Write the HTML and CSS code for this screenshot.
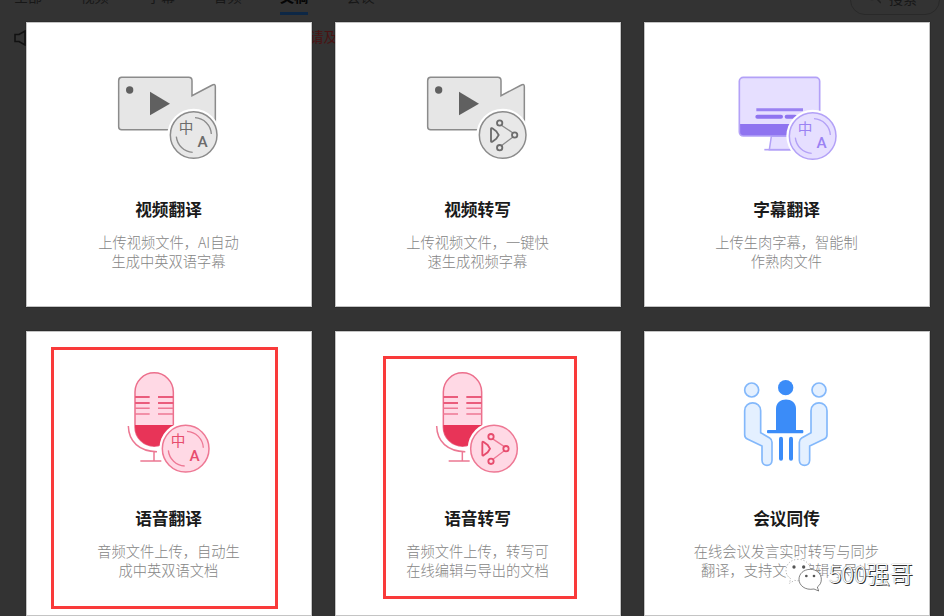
FILE: index.html
```
<!DOCTYPE html>
<html lang="zh-CN">
<head>
    <meta charset="UTF-8">
    <meta name="viewport" content="width=device-width, initial-scale=1.0">
    <title>翻译与转写</title>
    <link rel="stylesheet" href="styles.css">
</head>
<body>
    <!-- shared icon parts -->
    <svg class="defs" aria-hidden="true">
        <symbol id="camera" overflow="visible">
            <path d="M95 52H296Q306 52 306 62V107L367 75Q376 70 376 80V195L300 209H95Q86 209 86 200V62Q86 52 95 52Z" fill="#e6e6e6" stroke="#8b8b8b" stroke-width="4.5"/>
            <circle cx="119" cy="90" r="11" fill="#606060"/>
            <path d="M180 95L240 131L180 166Z" fill="#606060"/>
        </symbol>
        <symbol id="mic" overflow="visible">
            <path d="M135 96A57.500 57.500 0 0 1 250 96V201A57.500 57.500 0 0 1 135 201Z" fill="#ffd9e5" stroke="#ec6f8c" stroke-width="4.500"/>
            <path d="M135 195H250V201A57.500 57.500 0 0 1 135 201Z" fill="#e83458"/>
            <path d="M135 111H179M204 111H250M135 129H179M204 129H250" stroke="#ea5c7c" stroke-width="6"/>
            <path d="M135 145H179M204 145H250M135 162H179M204 162H250" stroke="#ee7894" stroke-width="4.500"/>
            <path d="M115 198C116 245 148 274 201 275M192 275V303M151 303H214" fill="none" stroke="#ec7893" stroke-width="4.500"/>
        </symbol>
        <symbol id="badge-lang" overflow="visible">
            <circle r="79" fill="#fff"/>
            <circle r="70" class="ring"/>
            <path d="M4 -52A52 52 0 0 1 53 -3M-52 5A52 52 0 0 0 -3 52" class="arc"/>
            <text x="-23" y="-7" class="zh">中</text>
            <text x="27" y="37" class="en">A</text>
        </symbol>
        <symbol id="badge-flow" overflow="visible">
            <circle r="79" fill="#fff"/>
            <circle r="70" class="ring"/>
            <path d="M-5 -30L31 -6M31 6L-5 33" class="arc"/>
            <path d="M-35 -18Q-35 -22 -31 -20L-19 -11L-12 0L-19 11L-31 20Q-35 22 -35 18Z" class="dot"/>
            <circle cx="-9" cy="-36" r="8" class="dot"/>
            <circle cx="36" cy="0" r="8" class="dot"/>
            <circle cx="-9" cy="38" r="8" class="dot"/>
        </symbol>
    </svg>

    <header class="header">
        <nav class="tabs">
            <span class="tab">全部</span>
            <span class="tab">视频</span>
            <span class="tab">字幕</span>
            <span class="tab">音频</span>
            <span class="tab active">文稿</span>
            <span class="tab">会议</span>
        </nav>
        <div class="search">
            <svg width="16" height="16" viewBox="0 0 16 16"><circle cx="7" cy="6" r="5.500"/><path d="M11 10l5 5"/></svg>
            <span>搜索</span>
        </div>
    </header>

    <div class="notice">
        <svg width="14" height="16" viewBox="0 0 14 16"><path d="M1 4.500H5L11 1V15L5 11.500H1Z"/></svg>
        <span>请及</span>
    </div>

    <main class="cards">
        <div class="card">
            <svg class="icon gray" viewBox="12 0 450 330">
                <use href="#camera"/>
                <use href="#badge-lang" x="311" y="225"/>
            </svg>
            <h3>视频翻译</h3>
            <p>上传视频文件，AI自动<br>生成中英双语字幕</p>
        </div>

        <div class="card">
            <svg class="icon gray" viewBox="12 0 450 330">
                <use href="#camera"/>
                <use href="#badge-flow" x="311" y="225"/>
            </svg>
            <h3>视频转写</h3>
            <p>上传视频文件，一键快<br>速生成视频字幕</p>
        </div>

        <div class="card">
            <svg class="icon purple" viewBox="-9 0 450 330">
                <path d="M169 229L163 269H235V229Z" fill="#e6dfff" stroke="#b3a1f7" stroke-width="4.500"/>
                <path d="M148 269H235" stroke="#b3a1f7" stroke-width="5"/>
                <rect x="73" y="52" width="241" height="176" rx="12" fill="#e6dfff"/>
                <path d="M73 192H314V216Q314 228 302 228H85Q73 228 73 216Z" fill="#8f74f0"/>
                <rect x="73" y="52" width="241" height="176" rx="12" fill="none" stroke="#b3a1f7" stroke-width="5"/>
                <path d="M124 149H264" stroke="#9a82f2" stroke-width="9"/>
                <path d="M127 170H198M215 170H240" stroke="#8f74f0" stroke-width="12" stroke-linecap="round"/>
                <use href="#badge-lang" x="293" y="228"/>
            </svg>
            <h3>字幕翻译</h3>
            <p>上传生肉字幕，智能制<br>作熟肉文件</p>
        </div>

        <div class="card">
            <svg class="icon red" viewBox="12 27 450 330">
                <use href="#mic"/>
                <use href="#badge-lang" x="287" y="266"/>
            </svg>
            <h3>语音翻译</h3>
            <p>音频文件上传，自动生<br>成中英双语文档</p>
            <div class="mark mark-left"></div>
        </div>

        <div class="card">
            <svg class="icon red" viewBox="14 27 450 330">
                <use href="#mic"/>
                <use href="#badge-flow" x="287" y="266"/>
            </svg>
            <h3>语音转写</h3>
            <p>音频文件上传，转写可<br>在线编辑与导出的文档</p>
            <div class="mark mark-right"></div>
        </div>

        <div class="card">
            <svg class="icon blue" viewBox="-9 12 450 330">
                <circle cx="110" cy="75" r="21"/>
                <circle cx="312" cy="75" r="21"/>
                <path d="M89 137C89 106 137 106 137 137V203L164 219Q171 223 171 232V286C171 306 141 306 141 286V243L97 222Q89 218 89 209Z"/>
                <path d="M336 137C336 106 288 106 288 137V203L260 219Q253 223 253 232V286C253 306 284 306 284 286V243L328 222Q336 218 336 209Z"/>
                <g class="solid">
                    <circle cx="212" cy="68" r="23"/>
                    <path d="M183 200V131C183 94 243 94 243 131V200Z"/>
                    <rect x="156" y="195" width="109" height="10" rx="3"/>
                    <rect x="192" y="215" width="12" height="72" rx="6"/>
                    <rect x="222" y="215" width="12" height="72" rx="6"/>
                </g>
            </svg>
            <h3>会议同传</h3>
            <p>在线会议发言实时转写与同步<br>翻译，支持文档编辑与导出</p>
        </div>
    </main>

    <div class="watermark">
        <svg width="38" height="34" viewBox="0 0 114 102">
            <path class="bubble far" d="M40 4C18 4 3 18 3 37C3 48 8 56 17 62L13 76L29 67C53 73 76 57 76 37C76 18 61 4 40 4Z"/>
            <circle cx="27" cy="27" r="5"/><circle cx="56" cy="27" r="5"/>
            <path class="bubble" d="M76 34C55 34 42 48 42 64C42 82 60 98 87 93L101 99L97 87C105 81 109 74 109 64C109 48 96 34 76 34Z"/>
            <circle cx="64" cy="54" r="4"/><circle cx="87" cy="54" r="4"/>
        </svg>
        <span>500强哥</span>
    </div>
</body>
</html>
```
FILE: styles.css
```
* {
    box-sizing: border-box;
}
body {
    position: relative;
    margin: 0;
    height: 616px;
    overflow: hidden;
    background: #333;
    font-family: "Noto Sans CJK SC", sans-serif;
}
.defs {
    position: absolute;
    width: 0;
    height: 0;
}

/* dimmed page behind the cards */
.header {
    display: flex;
    justify-content: space-between;
    height: 22px;
    padding: 0 4px 0 14px;
    font-size: 14px;
    color: #171717;
}
.tabs {
    display: flex;
    gap: 38.5px;
}
.tab {
    height: 15px;
    line-height: 20px;
    margin-top: -14px;
    width: 28px;
    white-space: nowrap;
}
.tab.active {
    height: 29px;
    color: #050505;
    font-weight: bold;
    border-bottom: 3px solid #0d2745;
}
.search {
    display: flex;
    gap: 8px;
    width: 90px;
    height: 30px;
    margin-top: -15px;
    padding: 2px 0 0 14px;
    line-height: 20px;
    border: 1px solid #292929;
    border-radius: 15px;
}
.search svg {
    fill: none;
    stroke: #202020;
    stroke-width: 1.5;
}
.notice {
    position: absolute;
    top: 30px;
    left: 14px;
    display: flex;
    justify-content: space-between;
    width: 323px;
    font-size: 13.5px;
    line-height: 13px;
    color: #4a1212;
}
.notice svg {
    fill: none;
    stroke: #111;
    stroke-width: 1.5;
}

.cards {
    position: relative;
    display: grid;
    grid-template-columns: repeat(3, 286px);
    grid-auto-rows: 285px;
    gap: 24px 23px;
    padding-left: 26px;
}
.card {
    position: relative;
    padding-top: 38px;
    background: #fff;
    box-shadow: inset 0 0 0 1px #c4c4c4, 0 0 1px #111;
    text-align: center;
}
.card h3 {
    margin: 27px 1px 0 0;
    font-size: 16.7px;
    line-height: 25px;
    color: #1a1a1a;
}
.card p {
    margin: 10px 1px 0 0;
    font-size: 14.25px;
    line-height: 19px;
    font-weight: 300;
    color: #858585;
    white-space: nowrap;
}

.icon {
    display: block;
    width: 150px;
    height: 110px;
    margin: 0 auto;
    overflow: visible;
}
.gray {
    --fill: #e8e8e8;
    --line: #8b8b8b;
    --dark: #6c6c6c;
}
.purple {
    --fill: #e6dfff;
    --line: #b3a1f7;
    --dark: #9b82f3;
}
.red {
    --fill: #ffd9e5;
    --line: #ee7894;
    --dark: #e74c6d;
}
.ring {
    fill: var(--fill);
    stroke: var(--line);
    stroke-width: 4.5;
}
.arc {
    fill: none;
    stroke: var(--line);
    stroke-width: 4;
}
.dot {
    fill: var(--fill);
    stroke: var(--dark);
    stroke-width: 5.5;
}
.zh, .en {
    fill: var(--dark);
    text-anchor: middle;
}
.zh {
    font-size: 44px;
    font-weight: 400;
}
.en {
    font: 500 46px Roboto, sans-serif;
}
.blue {
    fill: #e4f0ff;
    stroke: #83b8fb;
    stroke-width: 5;
}
.solid {
    fill: #3b8cf8;
    stroke: none;
}

/* red highlight boxes */
.mark {
    position: absolute;
    border: 3px solid #f93a3a;
}
.mark-left {
    top: 16px;
    left: 25px;
    width: 227px;
    height: 262px;
}
.mark-right {
    top: 25px;
    left: 48px;
    width: 194px;
    height: 243px;
}

.watermark {
    position: absolute;
    left: 785px;
    top: 557px;
    display: flex;
    gap: 6px;
    font-size: 23.3px;
    line-height: 33px;
    font-weight: 300;
    color: #fff;
    text-shadow: 1px 1px 0 #333, 0 0 1px #555;
}
.watermark svg {
    margin-top: 1px;
    fill: #555;
}
.watermark .bubble {
    fill: #fff;
    stroke: #444;
    stroke-width: 2;
}
.watermark .far {
    stroke: #999;
    stroke-dasharray: 4 5;
}
```
